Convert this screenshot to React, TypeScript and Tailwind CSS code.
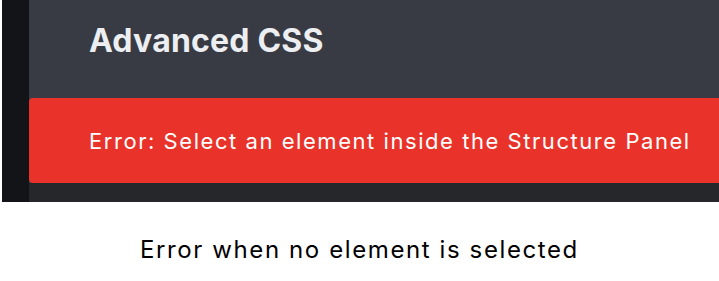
export default function App() {
  return (
    <div
      className="w-[719px] h-[281px] bg-white flex flex-col"
      style={{ fontFamily: "Inter, 'Noto Sans', sans-serif" }}
    >
      <div className="flex h-[202px] pl-[2px]">
        {/* dark side rail */}
        <div className="w-[27px] bg-[#131417]" />
        <div className="flex-1 flex flex-col bg-[#383b43]">
          <div className="h-[98px] flex items-center pl-[60px] pb-[16px]">
            <h2 className="text-[32px] font-bold text-[#eceef1] tracking-[0.2px]">Advanced CSS</h2>
          </div>
          <div className="h-[85px] bg-[#e9332a] rounded-l-[4px] flex items-center pl-[60px] pt-[1px]">
            <p className="text-[22px] text-white tracking-[1.55px]">Error: Select an element inside the Structure Panel</p>
          </div>
          <div className="flex-1 bg-[#25272b]" />
        </div>
      </div>
      <div className="flex-1 flex items-center justify-center pt-[16px]">
        <p className="text-[24px] text-black tracking-[1.6px]">Error when no element is selected</p>
      </div>
    </div>
  );
}
